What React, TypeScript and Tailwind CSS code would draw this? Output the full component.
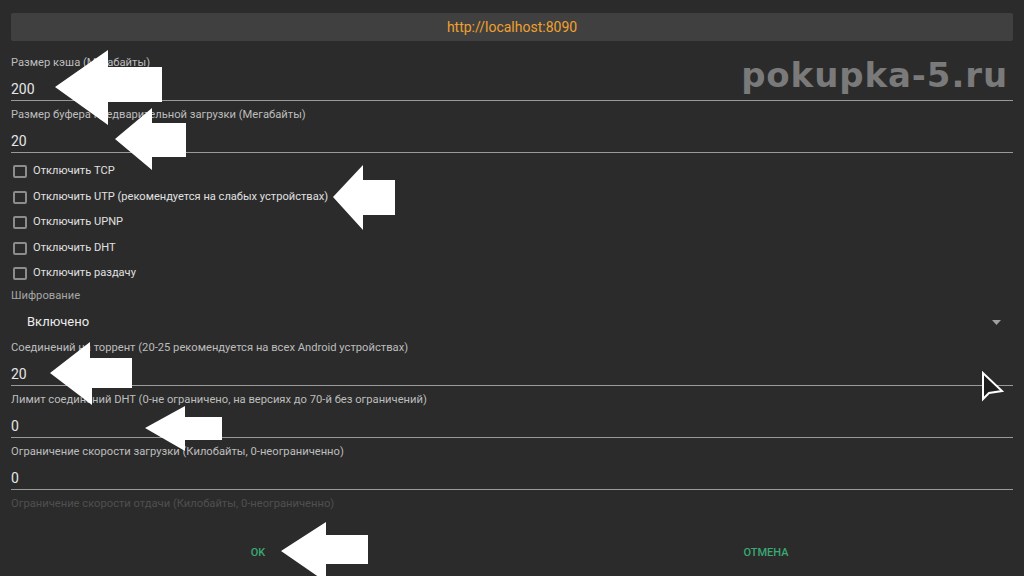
import React from "react";

const Field = ({ label, value }: { label: string; value: string }) => (
  <div className="h-[52px]">
    <div className="h-[16px] leading-[16px] text-[11.2px] text-[#bdbdbd] whitespace-nowrap">{label}</div>
    <div className="mt-[7px] h-[23px] leading-[22px] text-[14px] text-[#e6e6e6] border-b border-[#9a9a9a]">{value}</div>
  </div>
);

const Check = ({ label }: { label: string }) => (
  <div className="h-[25.5px] flex items-center gap-[6px] pl-[2px]">
    <div className="w-[14px] h-[13px] rounded-[2px] border-2 border-[#8c8c8c]" />
    <span className="text-[11.1px] text-[#e0e0e0] whitespace-nowrap">{label}</span>
  </div>
);

export default function App() {
  return (
    <div
      className="relative w-[1024px] h-[576px] overflow-hidden bg-[#2b2b2b]"
      style={{ fontFamily: "Roboto, 'Noto Sans', sans-serif" }}
    >
      <div className="pt-[13px] px-[11px]">
        <div className="h-[28px] rounded-[2px] bg-[#404040] flex items-center justify-center text-[14px] text-[#f0a12e]">
          http://localhost:8090
        </div>
        <div className="h-[474px] overflow-hidden">
          <div className="mt-[14px]">
            <Field label="Размер кэша (Мегабайты)" value="200" />
            <Field label="Размер буфера предварительной загрузки (Мегабайты)" value="20" />
            <Check label="Отключить TCP" />
            <Check label="Отключить UTP (рекомендуется на слабых устройствах)" />
            <Check label="Отключить UPNP" />
            <Check label="Отключить DHT" />
            <Check label="Отключить раздачу" />
            <div className="mt-[1.5px] h-[16px] leading-[16px] text-[11.2px] text-[#a6a6a6]">Шифрование</div>
            <div className="mt-[5px] h-[26px] flex items-center justify-between pl-[16px] pr-[12px]">
              <span className="text-[13px] text-[#ececec]">Включено</span>
              <svg width="9" height="5" viewBox="0 0 9 5">
                <polygon points="0,0 9,0 4.5,5" fill="#a0a0a0" />
              </svg>
            </div>
            <div className="mt-[5px]">
              <Field label="Соединений на торрент (20-25 рекомендуется на всех Android устройствах)" value="20" />
              <Field label="Лимит соединений DHT (0-не ограничено, на версиях до 70-й без ограничений)" value="0" />
              <Field label="Ограничение скорости загрузки (Килобайты, 0-неограниченно)" value="0" />
              <div className="h-[16px] leading-[16px] text-[11.2px] text-[#4f4f4f] whitespace-nowrap">
                Ограничение скорости отдачи (Килобайты, 0-неограниченно)
              </div>
            </div>
          </div>
        </div>
      </div>
      <div className="flex px-[4px] h-[44px] mt-[16px]">
        <div className="flex-1 flex items-center justify-center text-[11px] font-medium text-[#3aa873]">OK</div>
        <div className="flex-1 flex items-center justify-center text-[11px] font-medium text-[#3aa873]">ОТМЕНА</div>
      </div>

      <div
        className="absolute top-[58px] right-[16px] text-[34px] font-bold text-[#7a7a7a] tracking-[0.9px] leading-none"
        style={{ fontFamily: "'DejaVu Sans', Verdana, sans-serif" }}
      >
        pokupka-5.ru
      </div>

      <svg className="absolute inset-0 pointer-events-none" width="1024" height="576" viewBox="0 0 1024 576">
        <g fill="#ffffff">
          <polygon points="55,87 108,50 108,67 162,67 162,102 108,102 108,125" />
          <polygon points="115,139 152,108 152,123 186,123 186,157 152,157 152,170" />
          <polygon points="333,197 363,165 363,180 395,180 395,215 363,215 363,230" />
          <polygon points="50,373 90,342 90,358 132,358 132,388 92,388 92,405" />
          <polygon points="145,428 185,406 185,417 222,417 222,440 185,440 185,451" />
          <polygon points="281,551 326,522 326,535 368,535 368,564 326,564 326,582" />
        </g>
        <polygon points="983,373 983,399 989,393 1002,391" fill="#1e1e1e" stroke="#ffffff" strokeWidth="2" strokeLinejoin="miter" />
      </svg>
    </div>
  );
}
